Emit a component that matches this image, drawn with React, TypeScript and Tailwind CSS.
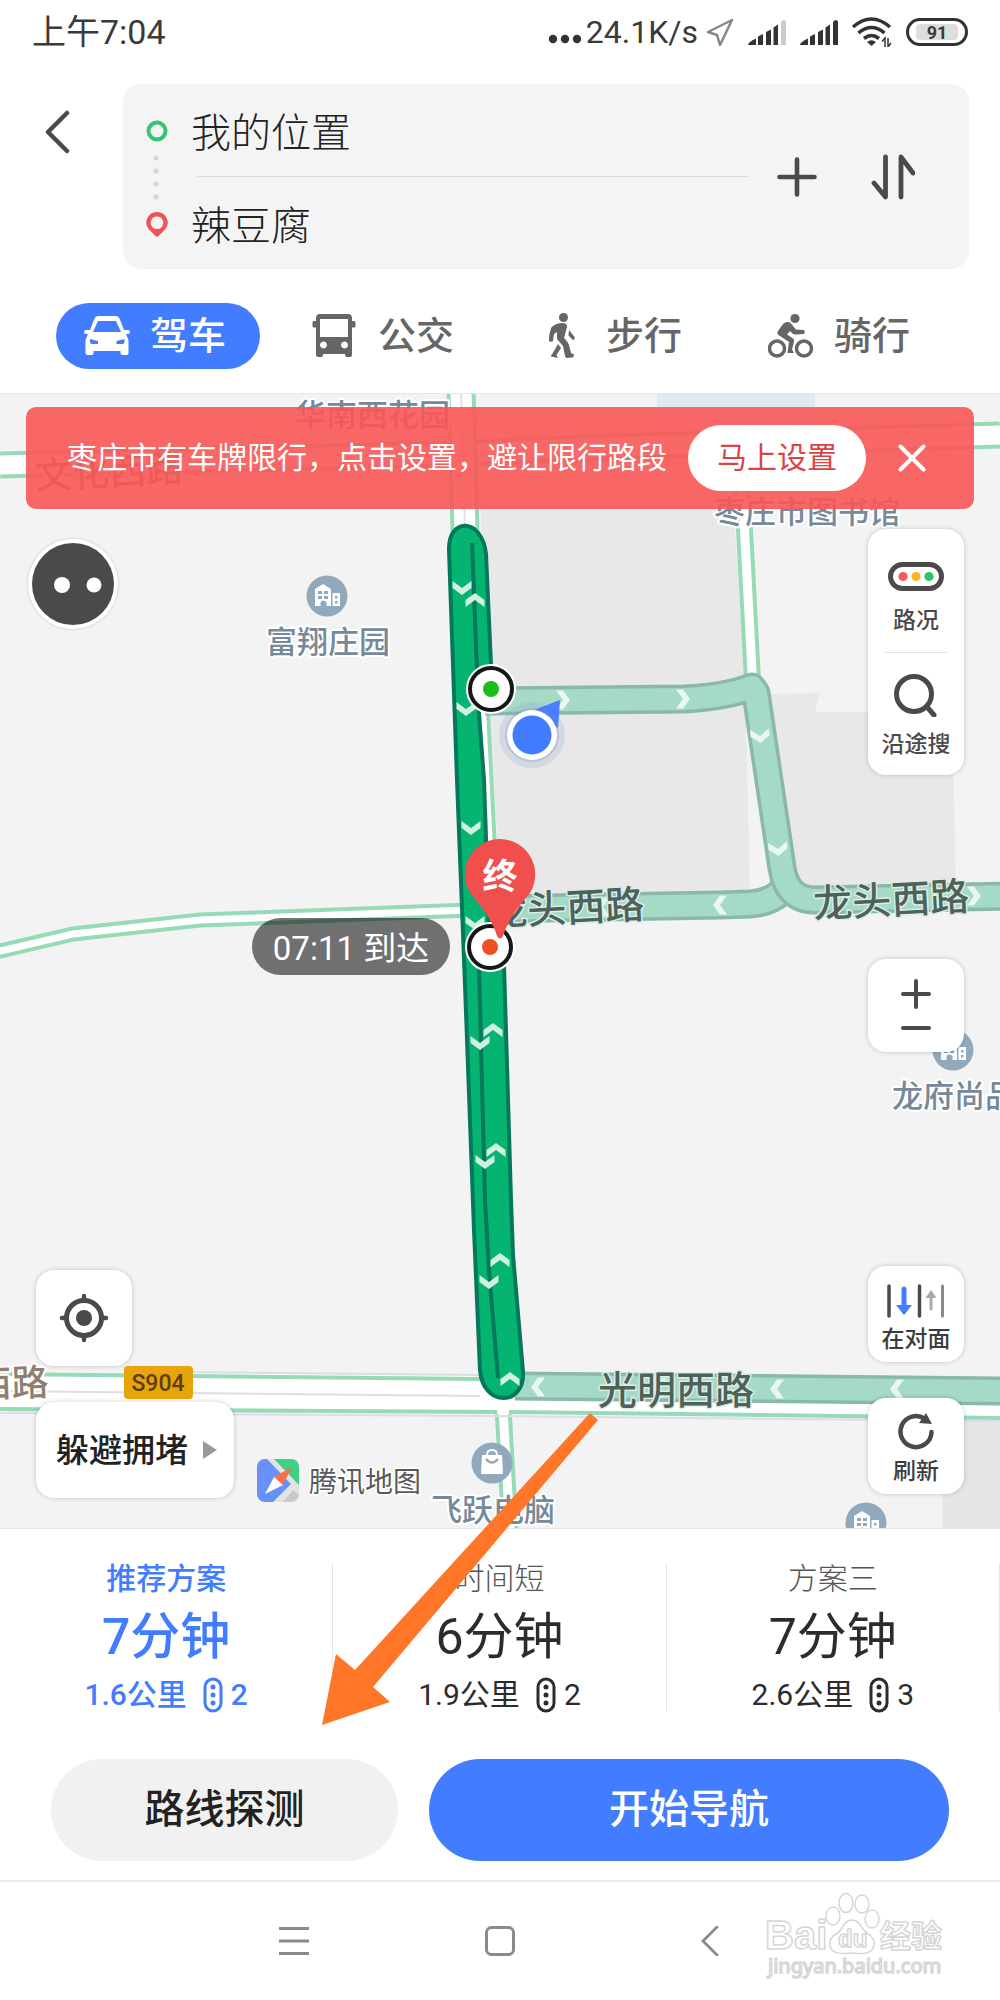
import type { ReactNode } from "react";
import { clsx } from "clsx";

const modes = [
  { id: "drive", label: "驾车", icon: <CarIcon /> },
  { id: "bus", label: "公交", icon: <BusIcon /> },
  { id: "walk", label: "步行", icon: <WalkIcon /> },
  { id: "bike", label: "骑行", icon: <BikeIcon /> },
];

const plans = [
  { title: "推荐方案", time: "7分钟", distance: "1.6公里", lights: 2 },
  { title: "时间短", time: "6分钟", distance: "1.9公里", lights: 2 },
  { title: "方案三", time: "7分钟", distance: "2.6公里", lights: 3 },
];

// x, y, rotation of every direction arrow (0 = pointing down)
const routeArrows = [
  [462, 588, 0],
  [475, 600, 180],
  [466, 709, 0],
  [471, 828, 0],
  [475, 923, 0],
  [493, 1030, 180],
  [480, 1043, 0],
  [496, 1150, 180],
  [485, 1162, 0],
  [500, 1260, 180],
  [489, 1282, 0],
  [510, 1379, 180],
];

const altArrows = [
  [563, 700, -90],
  [683, 699, -90],
  [760, 736, -5],
  [778, 849, -5],
  [720, 905, 90],
  [603, 907, 90],
  [974, 896, -90],
  [538, 1387, 90],
  [660, 1388, 90],
  [777, 1389, 90],
  [897, 1389, 90],
];

function CarIcon() {
  return (
    <svg viewBox="0 0 46 46" className="size-[46px]" fill="currentColor" fillRule="evenodd">
      <path d="M14 3h18q2.500 0 3.500 2.500L40 17h4q2 0 2 2t-2 2h-2l2.500 6v13q0 2-2 2h-4q-2 0-2-2v-2h-27v2q0 2-2 2h-4q-2 0-2-2V27L4 21H2q-2 0-2-2t2-2h4l4.500-11.500Q11.500 3 14 3zM14 8L9 19h28L32 8zM6 26l8 2v3H8q-2 0-2-2zM40.500 26l-8 2v3h6q2 0 2-2z" />
    </svg>
  );
}

function BusIcon() {
  return (
    <svg viewBox="0 0 46 46" className="size-[46px]" fill="currentColor" fillRule="evenodd">
      <path d="M8 1h28q4 0 4 4v3h2q1.500 0 1.500 1.500V13q0 1.500-1.500 1.500h-2V42q0 2-2 2h-3q-2 0-2-2v-1H11v1q0 2-2 2H6q-2 0-2-2V14.500H2Q.500 14.500.500 13V9.500Q.500 8 2 8h2V5q0-4 4-4zM8 6v18h28V6zM11.500 28.500a3.500 3.500 0 1 0 .010 0zM32.500 28.500a3.500 3.500 0 1 0 .010 0z" />
    </svg>
  );
}

function WalkIcon() {
  return (
    <svg viewBox="0 0 46 46" className="size-[46px]" fill="currentColor">
      <circle cx="23.500" cy="4.500" r="4.500" />
      <path d="M11 15q4-5 12-5 4 0 4 4l-3 11q4 4 5 7l2 8 3 1.500q0 3-2 3l-5 .500q-1.500 0-2-2l-2-10-6-7v-7l-3 2-1 7q-2 1.500-4 0 0-8 2-12zM29 17l6 7.500-1.500 3-5-5zM18 31l3 4-4.500 7 1.500 3-7-1.500q0-2 1.500-3z" />
    </svg>
  );
}

function BikeIcon() {
  return (
    <svg viewBox="0 0 46 46" className="size-[46px]" fill="currentColor">
      <circle cx="27" cy="5.500" r="4.600" />
      <circle cx="9" cy="35.500" r="7.500" fill="none" stroke="currentColor" strokeWidth="3.500" />
      <circle cx="36" cy="35.500" r="7.500" fill="none" stroke="currentColor" strokeWidth="3.500" />
      <path d="M10 18l5-7q3-3 7-1.500l6 7 8 .500q1.500 2 0 4l-9 .500q-2 0-5-3.500l-3 3.500 6 4q1.500 1 1 3l-2 8 2 3.500h-6.500l1.500-11-9-6q-4-2-2-5z" />
    </svg>
  );
}

function Signal({ dimLast = false }: { dimLast?: boolean }) {
  return (
    <svg viewBox="0 0 38 27" className="h-[27px] w-[38px]" fill="#333">
      <path d="M0 26q0-3 8-6.500V26zM10 17.500l5-2.500v11h-5zM18 13l5-2.500V26h-5zM25.500 8.500L30 5.500V26h-4.500z" />
      <path d="M33 3l2-2q3 0 3 2v23h-5z" fill={dimLast ? "#ccc" : "#333"} />
    </svg>
  );
}

function StatusBar() {
  return (
    <div className="flex h-16 items-center justify-between px-8 text-[#3a3a3a]">
      <span className="text-[34px] leading-none">上午7:04</span>
      <div className="flex items-center">
        <svg viewBox="0 0 34 28" className="h-7 w-[34px]" fill="#333">
          <circle cx="5" cy="21" r="4.200" />
          <circle cx="17" cy="21" r="4.200" />
          <circle cx="29" cy="21" r="4.200" />
        </svg>
        <span className="mr-2 ml-1 text-[32px] leading-none">24.1K/s</span>
        <svg viewBox="0 0 28 28" className="mr-3.5 size-7" fill="none" stroke="#888" strokeWidth="2.500" strokeLinejoin="round">
          <path d="M26 2L2 14l9 3 3 10z" />
        </svg>
        <Signal dimLast />
        <span className="w-[14px]" />
        <Signal />
        <svg viewBox="0 0 40 30" className="mr-3.5 ml-3.5 h-[30px] w-10" fill="none" stroke="#333" strokeWidth="3.600">
          <path d="M1 10q18.500-16 37 0M6.500 16q13-11 26 0M12 21.500q7.500-6 15 0" />
          <path d="M15 25q4.500-3.500 9 0l-4.500 4z" fill="#333" stroke="none" />
          <path d="M33 30v-9l-3 3.500M36 21v9l3-4" strokeWidth="1.500" />
        </svg>
        <div className="flex h-7 w-[62px] items-center rounded-full border-[3px] border-[#333] px-[7px]">
          <span className="flex h-4 w-full items-center justify-center rounded bg-[#ddd] text-[18px] font-bold">
            91
          </span>
        </div>
      </div>
    </div>
  );
}

function SearchCard() {
  return (
    <div className="flex pt-5 pr-[31px]">
      <button aria-label="返回" className="flex h-24 w-[123px] items-center pl-11">
        <svg viewBox="0 0 28 44" className="h-11 w-7" fill="none" stroke="#4a4a4a" strokeWidth="4.500" strokeLinecap="round" strokeLinejoin="round">
          <path d="M23 3L4 22l19 19" />
        </svg>
      </button>
      <div className="flex flex-1 items-center rounded-[18px] bg-[#f4f4f4] pl-[22px]">
        <svg viewBox="0 0 24 124" className="h-[124px] w-6" fill="none">
          <circle cx="12" cy="16" r="8.500" stroke="#34c671" strokeWidth="4" />
          <g fill="#d6d6d6">
            <circle cx="11" cy="43" r="2.500" />
            <circle cx="11" cy="56" r="2.500" />
            <circle cx="11" cy="69" r="2.500" />
            <circle cx="11" cy="82" r="2.500" />
          </g>
          <path fillRule="evenodd" fill="#ef5454" d="M12 97a10.500 10.500 0 0 1 8 17.500l-6.500 6.500q-1.500 1.500-3 0L4 114.500A10.500 10.500 0 0 1 12 97zm0 4.500a6.300 6.300 0 1 0 .010 0z" />
        </svg>
        <div className="ml-[22px] flex-1">
          <input
            aria-label="起点"
            defaultValue="我的位置"
            className="block h-[92px] w-full min-w-0 bg-transparent text-[40px] font-light text-[#222] outline-none"
          />
          <div className="ml-1.5 h-px bg-[#dadada]" />
          <input
            aria-label="终点"
            defaultValue="辣豆腐"
            className="block h-[92px] w-full min-w-0 bg-transparent text-[40px] font-light text-[#222] outline-none"
          />
        </div>
        <button aria-label="添加途经点" className="flex size-24 items-center justify-center">
          <svg viewBox="0 0 40 40" className="size-10" stroke="#4a4a4a" strokeWidth="4.600" strokeLinecap="round">
            <path d="M20 2.500v35M2.500 20h35" />
          </svg>
        </button>
        <button aria-label="交换起终点" className="mr-7 flex size-24 items-center justify-center">
          <svg viewBox="0 0 44 46" className="h-[46px] w-11" fill="none" stroke="#4a4a4a" strokeWidth="4.800" strokeLinecap="round" strokeLinejoin="round">
            <path d="M14.500 3v40L3 29M30 43V3l12 16" />
          </svg>
        </button>
      </div>
    </div>
  );
}

function ModeTabs() {
  return (
    <nav className="grid grid-cols-4 gap-6 px-14 pt-[34px] pb-6">
      {modes.map((mode, i) => (
        <button
          key={mode.id}
          className={clsx(
            "flex h-[66px] items-center gap-5 rounded-full pl-7 text-[38px] leading-none font-medium whitespace-nowrap",
            i === 0 ? "bg-[#427cff] text-white" : "text-[#666]"
          )}
        >
          {mode.icon}
          {mode.label}
        </button>
      ))}
    </nav>
  );
}

function BuildingPoi({ x, y }: { x: number; y: number }) {
  return (
    <g transform={`translate(${x} ${y})`}>
      <circle r="20.500" fill="#90a9bd" />
      <path fillRule="evenodd" fill="#fff" d="M-12-7l8-5 8 5v17h-4.500V6q-3.500-3-6 0v4H-12zM-9-5h4v3h-4zM-3-5h4v3h-4zM-9 0h4v3h-4zM-3 0h4v3h-4zM5.500-3H13v13H5.500zM8 0h2.500v2.500H8zM8 5h2.500v2.500H8z" />
    </g>
  );
}

function RoadLines({ d, width }: { d: string; width: number }) {
  return (
    <>
      <path d={d} stroke="#95dbb6" strokeWidth={width} fill="none" />
      <path d={d} stroke="#fff" strokeWidth={width - 8} fill="none" />
    </>
  );
}

function RouteBand({ d }: { d: string }) {
  return (
    <>
      <path d={d} stroke="#8ab8ab" strokeWidth="29" fill="none" strokeLinejoin="round" />
      <path d={d} stroke="#a5dac6" strokeWidth="22" fill="none" strokeLinejoin="round" />
    </>
  );
}

function Arrows({ items, color }: { items: number[][]; color: string }) {
  return (
    <>
      {items.map(([x, y, turn]) => (
        <path
          key={`${x}-${y}`}
          d="M-9.500-7L0 0l9.500-7V0L0 7l-9.500-7z"
          fill={color}
          transform={`translate(${x} ${y}) rotate(${turn})`}
        />
      ))}
    </>
  );
}

function MapCanvas() {
  return (
    <svg viewBox="0 394 1000 1134" preserveAspectRatio="xMidYMin slice" className="absolute inset-0 h-full w-full">
      <defs>
        <clipPath id="logo-clip">
          <rect width="42" height="43" rx="8" />
        </clipPath>
      </defs>
      <rect y="394" width="1000" height="1134" fill="#f3f3f3" />
      <path d="M657 394h158v26H657z" fill="#dfe9ee" />
      <path d="M480 500h253l12 180 5 210-250 8zM765 694l55-1-5 19 137-1 4 175H790z" fill="#e8e8e8" />
      <path d="M941 1415h59v113h-57z" fill="#e6e6e6" />

      {/* side roads */}
      <RoadLines d="M-4 952L73 934 200 920 470 910" width={15} />
      <RoadLines d="M739 450L744 520 753 690" width={17} />
      <RoadLines d="M0 465L450 454 580 448 1000 435" width={27} />
      <RoadLines d="M461 390L465 530 475 700 485 900" width={29} />
      <path d="M461 390l4 140" stroke="#dfe0ea" strokeWidth="2" />
      <RoadLines d="M503 1408L510 1530" width={17} />
      <path d="M0 1372L480 1376 1000 1380V1420L480 1414 0 1410z" fill="#fff" />
      <g fill="none">
        <path d="M0 1391L480 1396M180 1372l300 3M0 1413L490 1416 1000 1421" stroke="#dcdde8" strokeWidth="2" />
        <path d="M0 1374L480 1379M0 1409L497 1412M509 1412L1000 1418" stroke="#95dbb6" strokeWidth="4" />
      </g>

      {/* alternative routes */}
      <RouteBand d="M490 909L720 905 750 904Q768 903 780 893" />
      <RouteBand d="M485 701L684 699Q725 697 752 687L756 693 782 868Q787 900 815 900L1010 896" />
      <RouteBand d="M515 1386L1010 1391" />
      <Arrows items={altArrows} color="#e9f7f1" />

      {/* street names */}
      <g className="font-medium" paintOrder="stroke" strokeLinejoin="round">
        <g fill="#4d625b" stroke="#dceee6" strokeWidth="3" fontSize="39">
          <text x="489" y="926" transform="rotate(-3 489 926)">龙头西路</text>
          <text x="814" y="918" transform="rotate(-3 814 918)">龙头西路</text>
          <text x="598" y="1404">光明西路</text>
        </g>
        <g fill="#8f7f73" stroke="#fff" strokeWidth="4" fontSize="37">
          <text x="-25" y="1397" transform="rotate(-2 0 1397)">西路</text>
          <text x="36" y="489" transform="rotate(-3 36 489)">文化西路</text>
        </g>
        <g fill="#76899a" stroke="#fff" strokeWidth="4" fontSize="31">
          <text x="295" y="426">华南西花园</text>
          <text x="714" y="523">枣庄市图书馆</text>
          <text x="266" y="653">富翔庄园</text>
          <text x="892" y="1107">龙府尚品</text>
          <text x="431" y="1521">飞跃电脑</text>
        </g>
      </g>

      {/* main route, there and back */}
      <path
        d="M449 550C448 517 482 517 486 554L491 665 478 700 484 780 489 925 504 965 511 1200 513 1255 523 1372C525 1406 483 1408 480 1370L474 1230 465 985 457 780z"
        fill="#06b472"
        stroke="#04785a"
        strokeWidth="4"
        strokeLinejoin="round"
      />
      <path d="M472 543L477 670M479 965L485 1200 489 1270 498 1378" stroke="#04785a" strokeWidth="4" fill="none" />
      <Arrows items={routeArrows} color="#cff0e2" />

      {/* places */}
      <BuildingPoi x={327} y={596} />
      <BuildingPoi x={953} y={1050} />
      <BuildingPoi x={866} y={1523} />
      <g transform="translate(492 1463)">
        <circle r="20.500" fill="#90a9bd" />
        <path d="M-10-8H10L11 10q0 1-1 1h-20q-1 0-1-1z" fill="#fff" />
        <path d="M-5-8q0-5 5-5t5 5" fill="none" stroke="#fff" strokeWidth="2" />
        <path d="M-6-4q6 7 12 0" fill="none" stroke="#90a9bd" strokeWidth="2.500" />
      </g>
      <rect x="124" y="1366" width="69" height="33" rx="4" fill="#e8a50b" />
      <text x="158" y="1391" textAnchor="middle" fontSize="23" className="font-medium" fill="#5e3d08">
        S904
      </text>

      {/* map provider */}
      <g transform="translate(257 1459)" clipPath="url(#logo-clip)">
        <rect width="42" height="43" fill="#e3e3e3" />
        <path d="M0 0h10l24 25-18 18H0z" fill="#6790fa" />
        <path d="M17 0h25v26z" fill="#3fd084" />
        <path d="M26 43l10-12 6 5v7z" fill="#c9c9c9" />
        <path d="M35 8L17 18l8 9z" fill="#f8704a" />
        <path d="M17 18L8 35l18-9z" fill="#fff" />
      </g>
      <text x="309" y="1492" fontSize="28" fill="#5a5a5a" stroke="#fff" strokeWidth="3" paintOrder="stroke">
        腾讯地图
      </text>

      {/* current position */}
      <circle cx="532" cy="735" r="33" fill="#7f9fd4" opacity="0.2" />
      <path d="M560 700L534 710 558 728z" fill="#4a7dff" />
      <circle cx="532" cy="735" r="27" fill="#7f93b8" opacity="0.3" />
      <circle cx="532" cy="735" r="25" fill="#fff" />
      <circle cx="532" cy="735" r="19.500" fill="#427cff" />

      {/* start and end */}
      <g stroke="#171717" strokeWidth="4" fill="#fff">
        <circle cx="491" cy="689" r="23" stroke="#fff" />
        <circle cx="491" cy="689" r="21" />
        <circle cx="490" cy="947" r="23" stroke="#fff" />
        <circle cx="490" cy="947" r="21" />
      </g>
      <circle cx="491" cy="689" r="8" fill="#1cbd1a" />
      <circle cx="490" cy="947" r="8" fill="#ee5121" />
      <path d="M500 839a35.500 35.500 0 0 1 30 54Q508 918 503 936q-3 5-6 0-5-18-27-43a35.500 35.500 0 0 1 30-54z" fill="#f14e4e" />
      <text x="500" y="889" textAnchor="middle" fontSize="35" className="font-bold" fill="#fff">
        终
      </text>

      <rect x="252" y="918" width="198" height="57" rx="28.500" fill="#000" opacity="0.54" />
      <text x="351" y="960" textAnchor="middle" fontSize="33" fill="#fff">
        07:11 到达
      </text>
    </svg>
  );
}

function RestrictionBanner() {
  return (
    <div className="relative mx-[26px] mt-[13px] flex h-[102px] items-center justify-between rounded-[10px] bg-[#fa5757]/90 pr-6 pl-[41px]">
      <p className="text-[30px] leading-none whitespace-nowrap text-white">
        枣庄市有车牌限行，点击设置，避让限行路段
      </p>
      <div className="flex items-center gap-2">
        <button className="h-[66px] w-[178px] rounded-full bg-white text-[30px] leading-none text-[#d84545]">
          马上设置
        </button>
        <button aria-label="关闭" className="flex h-[66px] w-[76px] items-center justify-center">
          <svg viewBox="0 0 28 28" className="size-7" stroke="#fff" strokeWidth="4" strokeLinecap="round">
            <path d="M2.500 2.500l23 23M25.500 2.500l-23 23" />
          </svg>
        </button>
      </div>
    </div>
  );
}

function MapButton({ label, children }: { label: string; children: ReactNode }) {
  return (
    <button className="flex h-24 w-full flex-col items-center justify-end gap-2 rounded-[18px] bg-white pb-2 text-[23px] leading-7 font-medium text-[#3c3c3c] shadow-[0_0_5px_rgba(0,0,0,0.2)]">
      {children}
      {label}
    </button>
  );
}

function MapControls() {
  return (
    <div className="relative flex flex-1 justify-between px-9 pt-5">
      <div className="flex flex-col items-start pb-[30px]">
        <button aria-label="语音助手" className="mt-2.5 -ml-2 size-[90px] rounded-full bg-white shadow-[0_0_3px_rgba(0,0,0,0.2)]">
          <svg viewBox="0 0 90 90" className="size-full">
            <circle cx="45" cy="45" r="41" fill="#4a4a4a" />
            <circle cx="34" cy="46" r="8" fill="#fff" />
            <circle cx="66" cy="46" r="7.500" fill="#fff" />
          </svg>
        </button>
        <button aria-label="定位" className="mt-auto flex size-24 items-center justify-center rounded-[18px] bg-white shadow-[0_0_5px_rgba(0,0,0,0.2)]">
          <svg viewBox="0 0 50 50" className="size-[50px]" fill="none" stroke="#4a4a4a" strokeLinecap="round">
            <circle cx="25" cy="25" r="17.500" strokeWidth="5" />
            <circle cx="25" cy="25" r="8" fill="#4a4a4a" stroke="none" />
            <path d="M25 3v4M25 43v4M3 25h4M43 25h4" strokeWidth="4.500" />
          </svg>
        </button>
        <button className="mt-9 flex h-24 items-center gap-3.5 rounded-[18px] bg-white pr-[17px] pl-5 text-[33px] leading-none font-medium text-[#222] shadow-[0_0_5px_rgba(0,0,0,0.2)]">
          躲避拥堵
          <svg viewBox="0 0 15 18" className="h-[18px] w-[15px]" fill="#999">
            <path d="M1 0l14 9-14 9z" />
          </svg>
        </button>
      </div>

      <div className="flex w-24 flex-col pb-[34px]">
        <div className="flex flex-col items-center rounded-[18px] bg-white shadow-[0_0_5px_rgba(0,0,0,0.2)]">
          <button className="flex h-[123px] w-full flex-col items-center pt-[33px] text-[23px] leading-7 font-medium text-[#4a4a4a]">
            <svg viewBox="0 0 56 29" className="mb-4 h-[29px] w-14">
              <rect x="2.500" y="2.500" width="51" height="24" rx="12" fill="#fff" stroke="#4a4a4a" strokeWidth="5" />
              <circle cx="15" cy="14.500" r="4.600" fill="#f45b5b" />
              <circle cx="28" cy="14.500" r="4.600" fill="#ffb224" />
              <circle cx="41" cy="14.500" r="4.600" fill="#2cc463" />
            </svg>
            路况
          </button>
          <span className="h-px w-[62px] bg-[#e2e2e2]" />
          <button className="flex h-[122px] w-full flex-col items-center pt-[20px] text-[23px] leading-7 font-medium text-[#4a4a4a]">
            <svg viewBox="0 0 44 44" className="mb-3.5 size-11" fill="none" stroke="#4a4a4a" strokeWidth="5" strokeLinecap="round">
              <circle cx="20" cy="21" r="17.500" />
              <path d="M33 34l7 8" />
            </svg>
            沿途搜
          </button>
        </div>

        <div className="mt-[184px] flex h-[93px] flex-col rounded-[18px] bg-white shadow-[0_0_5px_rgba(0,0,0,0.2)]">
          <button aria-label="放大" className="flex h-[50px] items-end justify-center">
            <svg viewBox="0 0 30 30" className="size-[30px]" stroke="#4a4a4a" strokeWidth="4" strokeLinecap="round">
              <path d="M15 2v26M2 15h26" />
            </svg>
          </button>
          <button aria-label="缩小" className="flex flex-1 items-start justify-center pt-1">
            <svg viewBox="0 0 30 30" className="size-[30px]" stroke="#4a4a4a" strokeWidth="4" strokeLinecap="round">
              <path d="M2 15h26" />
            </svg>
          </button>
        </div>

        <div className="mt-auto flex flex-col gap-9">
          <MapButton label="在对面">
            <svg viewBox="0 0 58 34" className="h-[34px] w-[58px]" strokeLinecap="round">
              <path d="M2 2v30M32.500 2v30" stroke="#4a4a4a" strokeWidth="3.500" />
              <path d="M55.500 2v30" stroke="#888" strokeWidth="3" />
              <path d="M17 5v18" stroke="#427cff" strokeWidth="5" />
              <path d="M9 21h16l-8 10z" fill="#427cff" />
              <path d="M44 13v12" stroke="#aaa" strokeWidth="3" />
              <path d="M38.500 14h11l-5.500-8z" fill="#aaa" />
            </svg>
          </MapButton>
          <MapButton label="刷新">
            <svg viewBox="0 0 38 38" className="size-[38px]" fill="none" stroke="#4a4a4a" strokeWidth="4.500" strokeLinecap="round">
              <path d="M28 7A15.500 15.500 0 1 0 34.500 20" />
              <path d="M29 1l6 11-13-1z" fill="#4a4a4a" stroke="none" />
            </svg>
          </MapButton>
        </div>
      </div>
    </div>
  );
}

function PlanList() {
  return (
    <div className="grid grid-cols-3 border-t border-[#e6e6e6] pt-[34px]">
      {plans.map((plan, i) => (
        <button
          key={plan.title}
          className={clsx(
            "flex h-[148px] flex-col items-center border-r border-[#e6e6e6]",
            i === 0 ? "font-medium text-[#427cff]" : "text-[#2c2c2c]"
          )}
        >
          <span className={clsx("text-[30px] leading-8", i > 0 && "font-light text-[#555]")}>{plan.title}</span>
          <span className="mt-3 text-[50px] leading-[60px]">{plan.time}</span>
          <span className="mt-2.5 flex items-center text-[30px] leading-[34px]">
            {plan.distance}
            <svg viewBox="0 0 20 36" className="mr-2 ml-4 h-9 w-5" fill="none" stroke="currentColor" strokeWidth="3">
              <rect x="2" y="2" width="16" height="32" rx="8" />
              <path d="M10 10v.1M10 18v.1M10 26v.1" strokeWidth="5" strokeLinecap="round" />
            </svg>
            {plan.lights}
          </span>
        </button>
      ))}
    </div>
  );
}

function SystemNav() {
  return (
    <div className="relative flex h-[120px] items-center justify-center gap-[176px] border-t-2 border-[#ebebeb]">
      <button aria-label="菜单">
        <svg viewBox="0 0 30 30" className="size-[30px]" stroke="#8a8a8a" strokeWidth="2.800">
          <path d="M0 2.500h30M0 15h30M0 27.500h30" />
        </svg>
      </button>
      <button aria-label="主屏幕">
        <svg viewBox="0 0 30 30" className="size-[30px]" fill="none" stroke="#8a8a8a" strokeWidth="3">
          <rect x="1.500" y="1.500" width="27" height="27" rx="5" />
        </svg>
      </button>
      <button aria-label="后退">
        <svg viewBox="0 0 30 30" className="size-[30px]" fill="none" stroke="#8a8a8a" strokeWidth="2.800" strokeLinecap="round">
          <path d="M26 1L12 15l14 14" />
        </svg>
      </button>
      <Watermark />
    </div>
  );
}

function Watermark() {
  return (
    <svg viewBox="0 0 190 100" className="absolute right-[48px] bottom-[9px] h-[100px] w-[190px]" fill="#fff" stroke="#d6d6d6" strokeWidth="1.500" strokeLinejoin="round">
      <g className="font-bold">
        <text x="3" y="58" fontSize="40" fontFamily="Liberation Sans">Bai</text>
        <path d="M90 29q6 0 10 8 4 5 9 8 6 7 1 14-5 5-20 3-15 2-20-3-5-7 1-14 6-3 9-8 4-8 10-8z" />
        <ellipse cx="71" cy="25" rx="7" ry="9" />
        <ellipse cx="84" cy="12" rx="7" ry="9.500" />
        <ellipse cx="100" cy="13" rx="7" ry="9" />
        <ellipse cx="110" cy="28" rx="7" ry="9" />
        <text x="76" y="56" fontSize="24" fontFamily="Liberation Sans">du</text>
        <text x="118" y="56" fontSize="31">经验</text>
      </g>
      <text x="6" y="82" fontSize="20" fontFamily="Noto Sans">jingyan.baidu.com</text>
    </svg>
  );
}

export default function App() {
  return (
    <main className="relative flex min-h-screen flex-col overflow-hidden bg-white font-[Roboto,'Noto_Sans_CJK_SC',sans-serif]">
      <header>
        <StatusBar />
        <SearchCard />
        <ModeTabs />
      </header>

      <section className="relative flex flex-1 flex-col overflow-hidden border-t border-[#e6e6e6]">
        <MapCanvas />
        <RestrictionBanner />
        <MapControls />
      </section>

      <section className="bg-white">
        <PlanList />
        <div className="flex gap-[31px] px-[51px] pt-12 pb-[19px]">
          <button className="h-[102px] flex-[2] rounded-full bg-[#f1f1f1] text-[40px] leading-none font-medium text-[#222]">
            路线探测
          </button>
          <button className="h-[102px] flex-[3] rounded-full bg-[#427cff] text-[40px] leading-none font-medium text-white">
            开始导航
          </button>
        </div>
        <SystemNav />
      </section>

      {/* pointer to the route check button */}
      <svg viewBox="0 0 276 314" className="pointer-events-none absolute bottom-[274px] left-[322px] h-[314px] w-[276px]" fill="#ff7629">
        <path d="M268 1l8 7L51 275l17 15L0 313l14-71 19 16z" />
      </svg>
    </main>
  );
}
